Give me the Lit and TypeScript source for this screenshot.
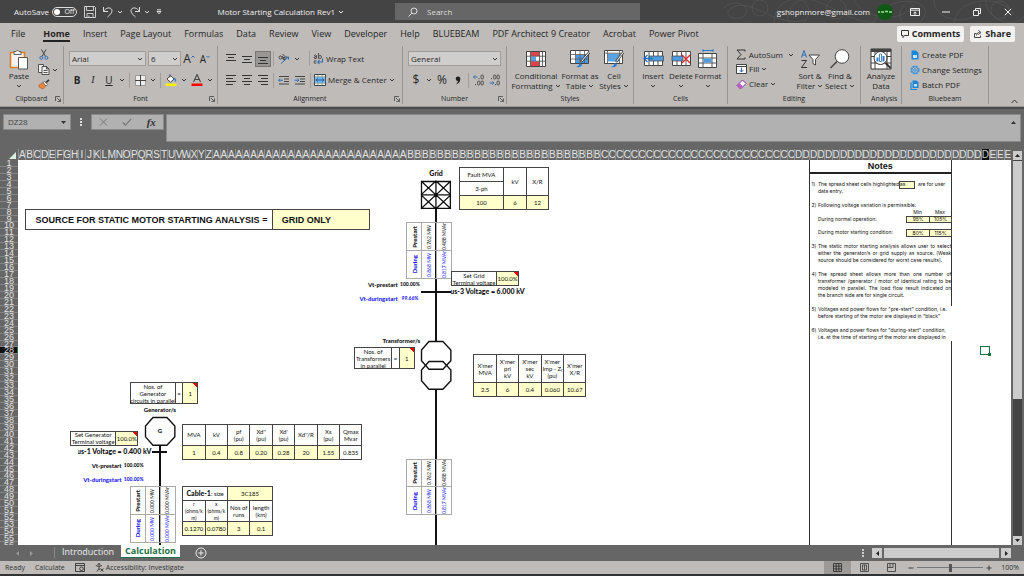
import { LitElement, html, css, nothing, TemplateResult } from "lit";
import { customElement } from "lit/decorators.js";

const COLS = 133;
const ROWS = 56;

/* ---------- icons ---------- */
const chev = html`<svg class="chev" width="6" height="6" viewBox="0 0 6 6"><path d="M1 2l2 2 2-2" fill="none" stroke="#333" stroke-width="1"/></svg>`;
const launcher = html`<svg class="launch" width="6" height="6" viewBox="0 0 6 6"><path d="M.5 5V.5H5M2 2l3 3M5.500 2.500v3h-3" fill="none" stroke="#444" stroke-width=".8"/></svg>`;
const bars = (d: string) => html`<svg width="12" height="12" viewBox="0 0 12 12"><path d=${d} stroke="#333" fill="none"/></svg>`;

const icSave = html`<svg width="12" height="12" viewBox="0 0 12 12" fill="none" stroke="#eee" stroke-width=".9"><path d="M.5 .5h10l1 1v10H.5zM2.500 .5v4h7v-4M3 11.500V7.500h6v4M5 9.500v2"/></svg>`;
const icUndo = html`<svg width="12" height="12" viewBox="0 0 12 12" fill="none" stroke="#ccc" stroke-width="1"><path d="M1.500 1v4.500H6M1.500 5.500C4 1.500 8 1 9.500 3.200 11 5.500 9 8 5.500 11"/></svg>`;
const icRedo = html`<svg width="12" height="12" viewBox="0 0 12 12" fill="none" stroke="#ccc" stroke-width="1"><path d="M10.500 1v4.500H6M10.500 5.500C8 1.500 4 1 2.500 3.200 1 5.500 3 8 6.500 11"/></svg>`;
const icSearch = html`<svg width="10" height="10" viewBox="0 0 10 10" fill="none" stroke="#ddd"><circle cx="6" cy="4" r="3"/><path d="M4 6L.5 9.500"/></svg>`;
const icPaste = html`<svg width="20" height="21" viewBox="0 0 20 21"><path d="M1.500 3.500h14v15h-14z" fill="#f4f1ee" stroke="#d9812a" stroke-width="1.600"/><path d="M5 2.500h2a1.600 1.600 0 013 0h2v3H5z" fill="#eee" stroke="#555" stroke-width=".9"/><path d="M9.500 8.500h9v11.500h-9z" fill="#fff" stroke="#555"/></svg>`;
const icCut = html`<svg width="10" height="11" viewBox="0 0 10 11" fill="none"><path d="M2.500 .5l4 7M7 .5l-4 7" stroke="#444"/><circle cx="2.400" cy="8.800" r="1.500" stroke="#2b6cb5"/><circle cx="7.400" cy="8.800" r="1.500" stroke="#2b6cb5"/></svg>`;
const icCopy = html`<svg width="12" height="11" viewBox="0 0 12 11" fill="#eee" stroke="#444" stroke-width=".9"><path d="M.5 .5h5v8h-5z"/><path d="M4 2.500h4.500l2.500 2.500v5.500H4zM8.500 2.500V5H11M5.500 6.500h4M5.500 8.500h4"/></svg>`;
const icPainter = html`<svg width="12" height="11" viewBox="0 0 12 11"><path d="M1 6l4-2.500 3 3L5 10 1 8z" fill="#f0883a" stroke="#a9561c" stroke-width=".6"/><path d="M5 3.500l1.500-1 3 3L8 7z" fill="#fff" stroke="#444" stroke-width=".7"/><path d="M8 3.500L11 .8" stroke="#333" stroke-width="1.600"/></svg>`;
const icBorders = html`<svg width="11" height="11" viewBox="0 0 11 11"><path d="M.5 .5h10v10H.5z" fill="#eee" stroke="#999"/><path d="M5.500 0v11M0 5.500h11" stroke="#444"/></svg>`;
const icFill = html`<svg width="12" height="12" viewBox="0 0 12 12"><path d="M2 5l3.500-3.500L9 5 5.500 8.300z" fill="#fff" stroke="#444"/><path d="M5 .3v3" stroke="#444"/><path d="M9.500 4q1.500 2 .8 3.500" stroke="#2b7cd3" fill="none" stroke-width="1.400"/><path d="M.5 9.500h11V12H.5z" fill="#ffef00"/></svg>`;
const icFontColor = html`<svg width="12" height="12" viewBox="0 0 12 12"><path d="M2.500 8L6 .5 9.500 8M3.800 5.500h4.500" fill="none" stroke="#444" stroke-width="1.100"/><path d="M.5 9.500h11V12H.5z" fill="#f00"/></svg>`;
const icOrient = html`<svg width="12" height="12" viewBox="0 0 12 12" fill="none"><circle cx="2.500" cy="4.500" r="1.500" stroke="#444"/><path d="M4 3l2 3M4.500 1l4 4" stroke="#444"/><circle cx="6" cy="5.500" r="1.200" stroke="#444"/><path d="M3 10.500L10.500 4M8 4h2.500v2.500" stroke="#2b6cb5"/></svg>`;
const icWrap = html`<svg width="11" height="12" viewBox="0 0 11 12" fill="none" stroke="#444" stroke-width=".9"><path d="M1 2.500q2-1 2.500 0V5.500M3.500 3.500q-3 0-2.500 1.500t2.500 0M5.500 0v5.500M5.500 3q3-1.500 3 1t-3 1M3.500 8q-2.500-1-2.500 1t2.500 1"/><path d="M9.500 5.500v3.500H5M6.500 7L4.800 9l1.700 2" stroke="#2b6cb5" stroke-width="1.100"/></svg>`;
const icMerge = html`<svg width="12" height="12" viewBox="0 0 12 12"><path d="M.5 .5h11v11H.5z" fill="#fff" stroke="#444"/><path d="M4 .5v11M8 .5v11M.5 3h11M.5 9h11" stroke="#555" stroke-width=".7"/><path d="M.8 3.200h10.400v5.600H.8z" fill="#6fb1e8"/><path d="M2 6h8M3.500 4.500L2 6l1.500 1.500M8.500 4.500L10 6 8.500 7.500" stroke="#1c5a9c" fill="none"/></svg>`;
const icOutdent = html`<svg width="12" height="12" viewBox="0 0 12 12" fill="none"><path d="M1 2.500h10M6 5h5M6 7.500h5M1 10h10" stroke="#444"/><path d="M.5 6.200h4.500M2.300 4.500L.6 6.200l1.700 1.700" stroke="#2b6cb5"/></svg>`;
const icIndent = html`<svg width="12" height="12" viewBox="0 0 12 12" fill="none"><path d="M1 2.500h10M6 5h5M6 7.500h5M1 10h10" stroke="#444"/><path d="M.5 6.200h4.500M3.200 4.500l1.700 1.700-1.700 1.700" stroke="#2b6cb5"/></svg>`;
const icDecL = html`<svg width="12" height="12" viewBox="0 0 12 12" fill="none" stroke="#444" stroke-width=".9"><path d="M.5 3h4M2.200 1.300L.6 3l1.600 1.700" stroke="#2b6cb5"/><rect x="8" y="1" width="2.400" height="4" rx="1.200"/><rect x="4.500" y="7" width="2.400" height="4" rx="1.200"/><rect x="8" y="7" width="2.400" height="4" rx="1.200"/><path d="M6 4v1.200M2.500 10v1.200"/></svg>`;
const icDecR = html`<svg width="12" height="12" viewBox="0 0 12 12" fill="none" stroke="#444" stroke-width=".9"><path d="M.5 9h4.500M3.200 7.300L4.900 9l-1.700 1.700" stroke="#2b6cb5"/><rect x="4.500" y="1" width="2.400" height="4" rx="1.200"/><rect x="8" y="1" width="2.400" height="4" rx="1.200"/><rect x="8" y="7" width="2.400" height="4" rx="1.200"/><path d="M2.500 4v1.200M6.500 10v1.200"/></svg>`;
const icCond = html`<svg width="20" height="18" viewBox="0 0 20 18"><path d="M.5 1.500h19v15H.5z" fill="#fff" stroke="#444"/><path d="M5 2h8v4H5zM5 11.500h9v4.500H5z" fill="#e0434a"/><path d="M5 6.500h5v4.500H5z" fill="#5aa2e0"/><path d="M4.500 1.500v15M13.500 1.500v15M16.500 1.500v15M.5 6.200h19M.5 11.200h19" stroke="#555" stroke-width=".9" fill="none"/></svg>`;
const icTable = html`<svg width="20" height="20" viewBox="0 0 20 20"><path d="M.5 1.500h18v13H.5z" fill="#fff" stroke="#444"/><path d="M6 6h12v8H6z" fill="#4f9be0"/><path d="M5.500 1.500v13M10 1.500v13M14.500 1.500v13M.5 5.500h18M.5 10h18" stroke="#555" stroke-width=".8" fill="none"/><path d="M19.500 3L11 13" stroke="#444" stroke-width="2.400"/><path d="M19.500 3L11.500 12.400" stroke="#fff" stroke-width="1"/><path d="M6 18q3-.5 3.500-4l2.500 1.500Q11 19 6 18z" fill="#2b7cd3"/></svg>`;
const icCell = html`<svg width="20" height="20" viewBox="0 0 20 20"><path d="M.5 1.500h18v13H.5z" fill="#fff" stroke="#444"/><path d="M4 4.500h11.500v8H4z" fill="#5aa2e0"/><path d="M3.500 1.500v13M15.500 1.500v13M.5 4.200h18" stroke="#555" stroke-width=".8" fill="none"/><path d="M19.500 3L12 13" stroke="#444" stroke-width="2.400"/><path d="M19.500 3L12.500 12.400" stroke="#fff" stroke-width="1"/><path d="M7 18q3-.5 3.500-4l2.500 1.500Q12 19 7 18z" fill="#2b7cd3"/></svg>`;
const icInsert = html`<svg width="21" height="18" viewBox="0 0 21 18"><path d="M1.500 1.500h18v14h-18z" fill="#fff" stroke="#444"/><path d="M6 1.500v14M10.500 1.500v14M15 1.500v14" stroke="#555"/><path d="M6 6h14.500v5H6z" fill="#4f9be0" stroke="#444" stroke-width=".7"/><path d="M.8 8.500h9M4.500 5L1 8.500 4.500 12" stroke="#1f6fc0" stroke-width="1.300" fill="none"/></svg>`;
const icDelete = html`<svg width="21" height="18" viewBox="0 0 21 18"><path d="M1.500 1.500h18v14h-18z" fill="#fff" stroke="#444"/><path d="M6 1.500v14M10.500 1.500v14M15 1.500v14" stroke="#555"/><path d="M1 6h11v5H1z" fill="#4f9be0" stroke="#444" stroke-width=".7"/><path d="M11 5l8 8M19 5l-8 8" stroke="#e02a2a" stroke-width="1.400"/></svg>`;
const icFormat = html`<svg width="20" height="20" viewBox="0 0 20 20"><path d="M5 1.500h10M5 0v3M15 0v3" stroke="#2b7cd3"/><path d="M.5 4.500h18v14H.5z" fill="#fff" stroke="#444"/><path d="M5 4.500v14M14 4.500v14M.5 9h18M.5 14h18" stroke="#555"/><path d="M5.500 9.500h8v4h-8z" fill="#4f9be0"/></svg>`;
const icSigma = html`<svg width="10" height="11" viewBox="0 0 10 11"><path d="M9 2.500V1H1l4 4.500L1 10h8V8.500" fill="none" stroke="#333"/></svg>`;
const icFillDown = html`<svg width="11" height="10" viewBox="0 0 11 10"><path d="M.5 .5h10v9H.5z" fill="#fff" stroke="#444"/><path d="M.5 2.500h10" stroke="#444"/><path d="M5.500 3.500v4.500M3.500 6l2 2 2-2" stroke="#2b6cb5" fill="none"/></svg>`;
const icClear = html`<svg width="11" height="11" viewBox="0 0 11 11"><path d="M1 6.500L6.500 1 10 4.500 4.500 10z" fill="#fff" stroke="#8b2f9b"/><path d="M1 6.500L3.500 4 7 7.500 4.500 10z" fill="#b95cc8"/></svg>`;
const icSort = html`<svg width="20" height="20" viewBox="0 0 20 20" fill="none"><path d="M1.500 8.500L4 1.500l2.500 7M2.500 6h3.200" stroke="#2b6cb5"/><path d="M1.500 11.500h5L1.500 18.500H7" stroke="#333"/><path d="M9 6h10.500L15.500 10.500v5.500L13 14.500v-4z" fill="#fff" stroke="#444"/></svg>`;
const icFind = html`<svg width="20" height="20" viewBox="0 0 20 20"><circle cx="12" cy="7.500" r="6.800" fill="#fff" stroke="#444"/><path d="M7 12.500L.5 19" stroke="#444" stroke-width="1.400"/></svg>`;
const icAnalyze = html`<svg width="22" height="22" viewBox="0 0 22 22"><path d="M1 1h20v20H1z" fill="#fff" stroke="#333"/><path d="M1 1h20v3H1z" fill="#444"/><path d="M1 8.500h20M1 15h20M5 4v17M17 4v17" stroke="#444"/><circle cx="10.500" cy="10" r="6.500" fill="#fff" stroke="#333"/><path d="M6.500 9.500h2v4h-2zM12.500 8h2v5.500h-2z" fill="#2b7cd3"/><path d="M9.500 6h2v7.500h-2z" fill="#fff" stroke="#2b6cb5" stroke-width=".8"/><path d="M15.500 15l5 5" stroke="#333" stroke-width="2"/></svg>`;
const icPdf1 = html`<svg width="8" height="10" viewBox="0 0 8 10"><path d="M.5 .5h4.500L7.500 3v6.500h-7z" fill="#1a86d9"/><path d="M2 5h4v3H2z" fill="#c9e4fb"/></svg>`;
const icPdf2 = html`<svg width="10" height="10" viewBox="0 0 10 10" fill="none" stroke="#3a95dd"><circle cx="5" cy="5" r="3.800" stroke-width="1.600" stroke-dasharray="2 1"/><circle cx="5" cy="5" r="3.200"/><circle cx="5" cy="5" r="1.300"/></svg>`;
const icPdf3 = html`<svg width="9" height="10" viewBox="0 0 9 10"><path d="M1 2.500v7h6" fill="none" stroke="#1a86d9" stroke-width="1.200"/><path d="M2.500 .5h4L8.500 2.500v5.500h-6z" fill="#1a86d9"/><path d="M4 4h3v2.500H4z" fill="#c9e4fb"/></svg>`;
const icGridView = html`<svg width="9" height="9" viewBox="0 0 9 9"><path d="M.5 .5h8v8h-8zM3.200 .5v8M5.900 .5v8M.5 3.200h8M.5 5.900h8" fill="none" stroke="#333" stroke-width=".9"/></svg>`;
const icPageView = html`<svg width="9" height="9" viewBox="0 0 9 9"><path d="M.5 .5h8v8h-8zM2.500 2h4v5h-4zM4.500 2v5" fill="none" stroke="#444" stroke-width=".9"/></svg>`;
const icBreakView = html`<svg width="9" height="9" viewBox="0 0 9 9"><path d="M.5 .5h8v8h-8zM3 .5v4h3v-4M.5 4.500H3" fill="none" stroke="#444" stroke-width=".9"/></svg>`;

/* ---------- sheet data ---------- */
type Area = [number, number, number, number]; // column start, row start, column end, row end
const area = (a: Area) => `grid-area:${a[1]}/${a[0]}/${a[3]}/${a[2]}`;

interface Cell { w: number; t: string | TemplateResult; k?: string; rows?: number }
interface DataTable { name: string; at: Area; rows: { h: number; cells: Cell[] }[] }

const c3 = (ts: string[], k = "") => ts.map((t) => ({ w: 3, t, k }));
const tables: DataTable[] = [
  { name: "Grid data", at: [60, 2, 72, 8], rows: [
    { h: 2, cells: [{ w: 6, t: "Fault MVA" }, { w: 3, t: "kV", rows: 4 }, { w: 3, t: "X/R", rows: 4 }] },
    { h: 2, cells: [{ w: 6, t: "3-ph" }] },
    { h: 2, cells: [{ w: 6, t: "100", k: "in" }, { w: 3, t: "6", k: "in" }, { w: 3, t: "12", k: "in" }] },
  ] },
  { name: "Transformer data", at: [62, 29, 77, 35], rows: [
    { h: 4, cells: c3(["X'mer\nMVA", "X'mer\npri\nkV", "X'mer\nsec\nkV", "X'mer\nImp - Zₜ\n(pu)", "X'mer\nX/R"]) },
    { h: 2, cells: c3(["2.5", "6", "0.4", "0.060", "10.67"], "in") },
  ] },
  { name: "Generator data", at: [23, 39, 47, 44], rows: [
    { h: 3, cells: c3(["MVA", "kV", "pf\n(pu)", "Xd''\n(pu)", "Xd'\n(pu)", "Xd''/R", "Xs\n(pu)", "Qmax\nMvar"]) },
    { h: 2, cells: [...c3(["1", "0.4", "0.8", "0.20", "0.28", "20", "1.55"], "in"), { w: 3, t: "0.835" }] },
  ] },
  { name: "Cable data", at: [23, 48, 35, 55], rows: [
    { h: 2, cells: [{ w: 6, t: html`<b>Cable-1</b>: size` }, { w: 6, t: "3C185", k: "in" }] },
    { h: 3, cells: [...c3(["r\n(ohms/k\nm)", "x\n(ohms/k\nm)"], "sm"), ...c3(["Nos of\nruns", "length\n(km)"])] },
    { h: 2, cells: c3(["0.1270", "0.0780", "3", "0.1"], "in") },
  ] },
];

const flows: { x: number; y: number; v: string[] }[] = [
  { x: 53, y: 10, v: ["0.762 MW", "0.488 MVAr", "0.868 MW", "0.817 MVAr"] },
  { x: 53, y: 44, v: ["0.762 MW", "0.488 MVAr", "0.868 MW", "0.817 MVAr"] },
  { x: 16, y: 48, v: ["0.000 MW", "0.000 MVAr", "0.000 MW", "0.000 MVAr"] },
];

const settings: { id: string; label: string; at: Area; eq?: Area; val: Area; v: string }[] = [
  { id: "sg", label: "Set Grid\nTerminal voltage", at: [59, 17, 65, 19], val: [65, 17, 68, 19], v: "100.0%" },
  { id: "nt", label: "Nos. of\nTransformers\nin parallel", at: [46, 28, 51, 31], eq: [51, 28, 52, 31], val: [52, 28, 54, 31], v: "1" },
  { id: "ng", label: "Nos. of\nGenerator\ncircuits in parallel", at: [16, 33, 22, 36], eq: [22, 33, 23, 36], val: [23, 33, 25, 36], v: "1" },
  { id: "gv", label: "Set Generator\nTerminal voltage", at: [8, 40, 14, 42], val: [14, 40, 17, 42], v: "100.0%" },
];

const texts: { at: Area; k: string; t: string }[] = [
  { at: [53, 2, 61, 4], k: "b mid lg", t: "Grid" },
  { at: [44, 18, 52, 20], k: "b end", t: "Vt-prestart" },
  { at: [52, 18, 55, 20], k: "b tiny mid", t: "100.00%" },
  { at: [44, 20, 52, 22], k: "b end blue", t: "Vt-duringstart" },
  { at: [52, 20, 55, 22], k: "b tiny mid blue", t: "99.66%" },
  { at: [59, 19, 69, 21], k: "b end lg clip", t: "Bus-3 Voltage = 6.000 kV" },
  { at: [48, 26, 55, 28], k: "b end", t: "Transformer/s" },
  { at: [16, 36, 24, 38], k: "b mid", t: "Generator/s" },
  { at: [18, 38, 22, 42], k: "b mid", t: "G" },
  { at: [9, 42, 19, 44], k: "b end lg clip", t: "Bus-1 Voltage = 0.400 kV" },
  { at: [8, 44, 15, 46], k: "b end", t: "Vt-prestart" },
  { at: [15, 44, 18, 46], k: "b tiny mid", t: "100.00%" },
  { at: [7, 46, 15, 48], k: "b end blue", t: "Vt-duringstart" },
  { at: [15, 46, 18, 48], k: "b tiny mid blue", t: "100.00%" },
];

const notes: { row: number; n?: string; t: string; j?: boolean; end?: number }[] = [
  { row: 4, n: "1)", t: "The spread sheet cells highlighted", end: 119 },
  { row: 5, t: "data entry." },
  { row: 7, n: "2)", t: "Following voltage variation is permissible:" },
  { row: 9, t: "During normal operation:", end: 119 },
  { row: 11, t: "During motor starting condition:", end: 119 },
  { row: 13, n: "3)", t: "The static motor starting analysis allows user to select", j: true },
  { row: 14, t: "either the generator/s or grid supply as source. (Weak", j: true },
  { row: 15, t: "source should be considered for worst case results)." },
  { row: 17, n: "4)", t: "The spread sheet allows more than one number of", j: true },
  { row: 18, t: "transformer /generator / motor of identical rating to be", j: true },
  { row: 19, t: "modeled in parallel. The load flow result indicated on", j: true },
  { row: 20, t: "the branch side are for single circuit." },
  { row: 22, n: "5)", t: "Voltages and power flows for \"pre-start\" condition, i.e." },
  { row: 23, t: "before starting of the motor are displayed in \"black\"" },
  { row: 25, n: "6)", t: "Voltages and power flows for \"during-start\" condition," },
  { row: 26, t: "i.e. at the time of starting of the motor are displayed in" },
];

const noteCells: { at: Area; k: string; t: string }[] = [
  { at: [119, 4, 121, 5], k: "box in start", t: "as" },
  { at: [121, 4, 126, 5], k: "start gap", t: "are for user" },
  { at: [120, 8, 123, 9], k: "mid", t: "Min" },
  { at: [123, 8, 126, 9], k: "mid", t: "Max" },
  { at: [120, 9, 123, 10], k: "box in mid", t: "95%" },
  { at: [123, 9, 126, 10], k: "box in mid", t: "105%" },
  { at: [120, 11, 123, 12], k: "box in mid", t: "80%" },
  { at: [123, 11, 126, 12], k: "box in mid", t: "115%" },
];

const columnName = (i: number): string => (i < 26 ? "" : String.fromCharCode(64 + Math.floor(i / 26))) + String.fromCharCode(65 + (i % 26));

/* ---------- worksheet ---------- */
@customElement("work-sheet")
class WorkSheet extends LitElement {
  static styles = css`
    :host { display: grid; grid-template: 11px minmax(0, 1fr) / 18px minmax(0, 1fr); background: #666; min-height: 0; overflow: hidden; font-family: Lato, "Liberation Sans", sans-serif; }
    .corner { display: flex; justify-content: flex-end; align-items: flex-end; padding: 0 2px 1px 0; }
    .cols { display: grid; grid-template-columns: repeat(133, minmax(0, 1fr)); font: 10px/12px "Liberation Sans", sans-serif; color: #e4e4e4; }
    .cols span { border-left: 1px solid #8e8e8e; box-sizing: border-box; display: flex; justify-content: center; }
    .cols .on { background: #0c0c0c; color: #ccc; box-shadow: inset 0 -1px #1d7044; }
    .rowwrap, .canvas { overflow: hidden; min-height: 0; }
    .rows { height: 101%; display: grid; grid-template-rows: repeat(56, minmax(0, 1fr)); font: 9px/7px "Liberation Sans", sans-serif; color: #e4e4e4; text-align: center; }
    .rows span { border-bottom: 1px solid #858585; box-sizing: border-box; }
    .rows .on { color: #ddd; background: #111; box-shadow: inset -1px 0 #1d7044; }
    .canvas { background: #fff; }
    .grid { height: 101%; display: grid; grid-template-columns: repeat(133, minmax(0, 1fr)); grid-template-rows: repeat(56, minmax(0, 1fr)); font-size: 6px; line-height: 7px; color: #111; }
    table { display: grid; grid-template: subgrid / subgrid; }
    tbody, tr { display: contents; }
    th, td, .box { font-weight: normal; border: 1px solid #444; margin: 0 -1px -1px 0; padding: 0; }
    th, td, .set { display: flex; align-items: center; justify-content: center; text-align: center; white-space: pre; overflow: hidden; }
    .set { overflow: visible; }
    .in { background: #ffffcc; }
    .sm { font-size: 5px; }
    b { font-weight: 900; font-size: 7px; }
    .t { display: flex; align-items: center; white-space: pre; min-width: 0; }
    .b { font-weight: 900; }
    .lg { font-size: 7px; }
    .mid { justify-content: center; }
    .end { justify-content: flex-end; padding-right: 1px; }
    .start { justify-content: flex-start; }
    .gap { padding-left: 4px; }
    .clip { overflow: hidden; }
    .blue { color: #1c1cf0; }
    .tiny { font-size: 5px; }
    .flow { display: grid; grid-template: subgrid / subgrid; }
    .f { display: flex; align-items: center; justify-content: center; border: 1px solid #aaa; margin: 0 -1px -1px 0; overflow: hidden; font-size: 5px; }
    .f.b { font-size: 6px; }
    .f span { writing-mode: vertical-rl; transform: rotate(180deg); white-space: nowrap; }
    input { font: inherit; color: inherit; width: 100%; height: 100%; box-sizing: border-box; border: 0; padding: 0; margin: 0; background: none; text-align: center; min-width: 0; }
    .val { background: linear-gradient(225deg, #e00 3px, #ffffcc 3px); min-width: 0; }
    .src { display: flex; align-items: center; font: bold 9px/10px "Liberation Sans", sans-serif; padding-left: 9px; white-space: nowrap; }
    svg { display: block; width: 100%; height: 100%; overflow: visible; }
    .corner svg { width: 7px; height: 7px; }
    .v { border-left: 2px solid #111; margin-left: -1px; }
    .h { border-top: 2px solid #111; margin-top: -1px; }
    .nl { border-left: 1px solid #333; }
    .nh { border-bottom: 2px solid #222; font: bold 9px/10px "Liberation Sans", sans-serif; display: flex; align-items: center; justify-content: center; }
    .note, .num, .nc { font-family: Inter, "Liberation Sans", sans-serif; font-size: 5px; white-space: nowrap; }
    .note { padding-left: 1px; }
    .num { padding-left: 2px; }
    .j { text-align: justify; text-align-last: justify; }
    .sel { border: 1px solid #1d7044; margin: -1px; position: relative; }
    .sel::after { content: ""; position: absolute; right: -2px; bottom: -2px; width: 3px; height: 3px; background: #1d7044; }
  `;
  render() {
    const oct = "M8 .5H22L30 9V20L22 28.500H8L.5 20V9z";
    return html`
      <div class="corner"><svg viewBox="0 0 7 7"><path d="M7 0v7H0z" fill="#d8f0e2"/></svg></div>
      <div class="cols">${Array.from({ length: COLS }, (_, i) => html`<span class=${i === 129 ? "on" : ""}>${columnName(i)[0]}</span>`)}</div>
      <div class="rowwrap"><div class="rows">${Array.from({ length: ROWS }, (_, i) => html`<span class=${i === 27 ? "on" : ""}>${i + 1}</span>`)}</div></div>
      <div class="canvas"><div class="grid">
        <div class="v" style=${area([57, 8, 58, 27])}></div>
        <div class="v" style=${area([57, 34, 58, 57])}></div>
        <div class="v" style=${area([20, 42, 21, 57])}></div>
        <div class="h" style=${area([55, 20, 59, 21])}></div>
        <div class="h" style=${area([19, 43, 21, 44])}></div>
        <div style=${area([55, 4, 59, 8])}><svg viewBox="0 0 30 28" preserveAspectRatio="none"><path d="M.5 .5h29v27H.5zM0 14h30M15 0v28M0 0l15 14L30 0M0 14L15 0l15 14M0 14l15 14 15-14M0 28l15-14 15 14" fill="none" stroke="#111" stroke-width="1.300"/></svg></div>
        <div style=${area([55, 27, 59, 31])}><svg viewBox="0 0 30 28" preserveAspectRatio="none"><path d=${oct} fill="none" stroke="#111" stroke-width="1.400"/></svg></div>
        <div style=${area([55, 30, 59, 34])}><svg viewBox="0 0 30 28" preserveAspectRatio="none"><path d=${oct} fill="none" stroke="#111" stroke-width="1.400"/></svg></div>
        <div style=${area([18, 38, 22, 42])}><svg viewBox="0 0 30 28" preserveAspectRatio="none"><path d=${oct} fill="none" stroke="#111" stroke-width="1.400"/></svg></div>
        <div class="src box" style=${area([2, 8, 35, 11])}>SOURCE FOR STATIC MOTOR STARTING ANALYSIS =</div>
        <div class="src box in" style=${area([35, 8, 48, 11])}>GRID ONLY</div>
        ${tables.map((tb) => html`<table aria-label=${tb.name} style=${area(tb.at)}><tbody>${tb.rows.map((r) => html`<tr>${r.cells.map((c) => {
          const st = `grid-column:span ${c.w};grid-row:span ${c.rows ?? r.h}`;
          return c.k === "in" ? html`<td class="in" style=${st}>${c.t}</td>` : html`<th class=${c.k ?? ""} style=${st}>${c.t}</th>`;
        })}</tr>`)}</tbody></table>`)}
        ${flows.map((f) => html`<div class="flow" style=${area([f.x, f.y, f.x + 6, f.y + 8])}>${["Prestart", f.v[0], f.v[1], "During", f.v[2], f.v[3]].map((t, i) => html`<div class="f ${i > 2 ? "blue" : ""} ${i % 3 ? "" : "b"}" style="grid-area:${i > 2 ? 5 : 1}/${(i % 3) * 2 + 1}/span 4/span 2"><span>${t}</span></div>`)}</div>`)}
        ${settings.map((s) => html`
          <label class="set box" for=${s.id} style=${area(s.at)}>${s.label}</label>
          ${s.eq ? html`<div class="set box" style=${area(s.eq)}>=</div>` : nothing}
          <div class="box val" style=${area(s.val)}><input id=${s.id} .value=${s.v}></div>`)}
        ${texts.map((x) => html`<div class="t ${x.k}" style=${area(x.at)}>${x.t}</div>`)}
        <div class="nh" style=${area([107, 1, 126, 3])}>Notes</div>
        <div class="nl" style=${area([107, 1, 108, 57])}></div>
        <div class="nl" style=${area([126, 1, 127, 22])}></div>
        <div class="nl" style=${area([126, 27, 127, 57])}></div>
        ${notes.map((n) => html`
          ${n.n ? html`<div class="num" style=${area([107, n.row, 108, n.row + 1])}>${n.n}</div>` : nothing}
          <div class="note ${n.j ? "j" : ""}" style=${area([108, n.row, n.end ?? 126, n.row + 1])}>${n.t}</div>`)}
        ${noteCells.map((x) => html`<div class="t nc ${x.k}" style=${area(x.at)}>${x.t}</div>`)}
        <div class="sel" style=${area([130, 28, 131, 29])}></div>
      </div></div>`;
  }
}

/* ---------- application ---------- */
@customElement("app-root")
class AppRoot extends LitElement {
  static styles = css`
    :host { display: flex; flex-direction: column; height: 100vh; overflow: hidden; background: #666; font: 8px/10px "Open Sans", "Noto Sans", sans-serif; color: #262626; }
    * { box-sizing: border-box; }
    svg { display: block; flex: none; }
    button { font: inherit; color: inherit; background: none; border: 0; padding: 0; margin: 0; display: flex; align-items: center; justify-content: center; white-space: nowrap; }
    .title { height: 23px; flex: none; background: #444; color: #f2f2f2; display: grid; grid-template-columns: 395px 245px minmax(0, 1fr); align-items: center; position: relative; }
    .art { position: absolute; right: 0; top: 0; }
    .tl { display: flex; align-items: center; padding-left: 14px; }
    .switch { width: 25px; height: 10px; border: 1px solid #ddd; border-radius: 5px; font-size: 7px; gap: 4px; margin: 0 7px 0 3px; line-height: 8px; }
    .knob { width: 6px; height: 6px; border-radius: 3px; background: #fff; }
    .qa { gap: 3px; margin-right: 6px; }
    .qa path { stroke: #ddd; }
    .name { margin-left: auto; margin-right: 51px; gap: 3px; }
    .name path { stroke: #eee; }
    .search { height: 17px; background: #666; display: flex; align-items: center; gap: 9px; padding-left: 13px; }
    .search input { flex: 1; min-width: 0; border: 0; background: none; font: inherit; padding: 0; color: #eee; }
    .search input::placeholder { color: #ddd; }
    .tr { display: flex; align-items: center; justify-content: flex-end; padding-right: 11px; position: relative; }
    .avatar { width: 16px; height: 16px; border-radius: 8px; background: #0e5a14; margin: 0 17px 0 7px; }
    .win { width: 10px; margin-right: 21px; }
    .win:last-child { margin-right: 0; }
    .tabs { height: 21px; flex: none; background: #bebbb8; display: flex; align-items: center; padding: 0 9px 0 11px; gap: 13px; font-size: 9px; line-height: 12px; }
    .tab:first-child { margin-right: 5px; }
    .tab.on { font-weight: bold; box-shadow: 0 2px #222; }
    .act { background: #f3f2f1; height: 16px; border-radius: 2px; padding: 0 4px; gap: 3px; font-weight: bold; }
    .act.first { margin-left: auto; margin-right: -7px; }
    .ribbon { height: 63px; flex: none; background: #bebbb8; display: grid; grid-template-columns: 64px 154px 185px 104px 127px 94px 133px 41px 87px minmax(0, 1fr); border-bottom: 1px solid #999; }
    .group { display: grid; grid-template-rows: minmax(0, 1fr) 10px; border-right: 1px solid #979492; margin: 2px 0; }
    .foot { display: grid; grid-template-columns: 10px 1fr 10px; font-size: 7px; text-align: center; align-items: center; }
    .foot span { grid-column: 2; white-space: nowrap; }
    .body { display: flex; min-width: 0; }
    .cells { padding-left: 4px; }
    .stack { display: flex; flex-direction: column; justify-content: space-around; padding: 1px 0 2px; }
    .big { flex-direction: column; justify-content: flex-start; padding-top: 2px; line-height: 10px; min-width: 0; }
    .big .pic { height: 22px; display: flex; align-items: center; margin-bottom: 1px; }
    .big span.l { display: flex; align-items: center; gap: 2px; height: 10px; }
    .two { display: grid; grid-template-rows: 17px 18px; row-gap: 4px; padding: 4px 0 0 5px; align-content: start; }
    .line { display: flex; align-items: center; }
    .combo { display: grid; height: 15px; align-items: center; background: #d0cecc; border: 1px solid #a09d9b; }
    .combo > * { grid-area: 1/1; }
    .combo svg { justify-self: end; margin-right: 2px; }
    select { appearance: none; border: 0; background: none; font: inherit; color: inherit; padding: 0 0 0 2px; width: 100%; }
    .w76 { width: 77px; margin-right: 2px; }
    .w33 { width: 33px; }
    .w92 { width: 93px; }
    .s16 { width: 16px; height: 16px; }
    .s10 { width: 10px; height: 16px; }
    .bar { width: 1px; height: 15px; background: #a09d9b; margin: 0 2px; }
    .space { width: 5px; }
    .press { background: #999694; border: 1px solid #777; }
    .al { font-size: 12px; }
    .as { font-size: 10px; }
    .bold { font-weight: bold; font-size: 10px; }
    .ital { font-style: italic; font-size: 10px; font-family: "Liberation Serif", serif; }
    .und { text-decoration: underline; font-size: 10px; }
    .sym { font-size: 12px; }
    .wide { gap: 2px; padding-left: 1px; }
    .row { justify-content: flex-start; gap: 2px; }
    .row i { width: 11px; display: flex; justify-content: center; }
    .ch2 { margin-left: 3px; }
    .edit { width: 66px; padding-left: 8px; }
    .pdf { padding-left: 7px; }
    .collapse { align-self: end; justify-self: end; margin: 0 6px 2px 0; }
    .fbar { flex: none; height: 42px; border-top: 2px solid #4a4a4a; display: flex; align-items: flex-start; padding: 5px 3px 0 3px; }
    .namebox { width: 68px; height: 16px; background: #b1b1b1; border: 1px solid #8a8a8a; display: grid; align-items: center; }
    .namebox > * { grid-area: 1/1; }
    .namebox input { border: 0; background: none; font: inherit; color: #444; padding: 0 0 0 4px; width: 100%; }
    .namebox svg { justify-self: end; margin-right: 4px; }
    .dots { width: 20px; height: 16px; display: flex; align-items: center; justify-content: center; }
    .fx { width: 73px; height: 16px; background: #b1b1b1; border: 1px solid #8a8a8a; display: flex; justify-content: space-around; align-items: center; margin-right: 2px; }
    .fxl { font: italic bold 11px/12px "Liberation Serif", serif; color: #333; }
    .formula { flex: 1; min-width: 0; height: 28px; background: #b1b1b1; border: 1px solid #8a8a8a; display: grid; grid-template-columns: 1fr 14px; }
    .formula textarea { border: 0; background: none; resize: none; padding: 2px; font: inherit; min-width: 0; outline: 0; }
    .formula svg { margin: 5px 0 0 4px; }
    .main { flex: 1; min-height: 0; display: grid; grid-template-columns: minmax(0, 1fr) 13px; }
    .vs { display: grid; grid-template-rows: 9px 239fr 137fr 9px; margin: 2px 2px 0 2px; background: #444; }
    .sb { background: #ccc; }
    .vthumb { background: #ccc; margin-top: 1px; }
    .sheets { height: 16px; flex: none; display: flex; align-items: stretch; color: #eee; font-size: 9px; line-height: 12px; padding-right: 13px; }
    .sheets .nav { width: 14px; }
    .sheets .nav:first-child { margin-left: 10px; }
    .sheets .sep { width: 1px; background: #888; margin: 2px 7px 3px 16px; }
    .sheets .calc { background: #fff; color: #1d7044; font-weight: bold; padding: 0 4px; margin: 0 15px 2px 7px; border-bottom: 1px solid #1d7044; height: 13px; }
    .sheets .intro { height: 13px; }
    .hs { margin-left: auto; display: flex; align-items: center; gap: 2px; }
    .hs .hd { margin-right: 6px; }
    .hs .sb { width: 10px; height: 10px; }
    .hs .ht { width: 115px; height: 10px; background: #ccc; }
    .status { height: 13px; flex: none; background: #bebbb8; display: flex; align-items: center; padding: 0 5px; font-size: 7px; color: #333; gap: 10px; }
    .status .acc { gap: 2px; }
    .views { margin-left: auto; display: flex; align-self: stretch; }
    .views button { width: 27px; }
    .views .on { background: #9c9997; }
    .zoom { display: flex; align-items: center; gap: 3px; margin: 0 -1px 0 -7px; }
    .zoom input { appearance: none; width: 66px; height: 10px; margin: 0; background: linear-gradient(#777, #777) center / 100% 1px no-repeat; }
    .zoom input::-webkit-slider-thumb { appearance: none; width: 3px; height: 8px; background: #555; }
    .edge { height: 2px; flex: none; background: #333; }
  `;
  private foot(name: string, l = false) {
    return html`<div class="foot"><span>${name}</span>${l ? html`<button aria-label="${name} settings">${launcher}</button>` : nothing}</div>`;
  }
  private big(w: number, pic: TemplateResult, a: string, b: string, arrow = true) {
    return html`<button class="big" style="width:${w}px"><span class="pic">${pic}</span><span class="l">${a}</span><span class="l">${b}${arrow ? chev : nothing}</span></button>`;
  }
  render() {
    const tabs = ["File", "Home", "Insert", "Page Layout", "Formulas", "Data", "Review", "View", "Developer", "Help", "BLUEBEAM", "PDF Architect 9 Creator", "Acrobat", "Power Pivot"];
    return html`
      <header class="title">
        <svg class="art" width="300" height="23" viewBox="0 0 300 23" fill="none" stroke="#525252" stroke-width="1"><path d="M0 8c10-12 30 0 20 8s-26-4-8-10 40 22 70 14M50 23c0-30 40-30 34-8S52 22 70 4s50 20 80 18M130 0c10 20 50 24 60 4M150 23c10-30 60-26 50-6s-34 4-20-12M210 0c0 26 50 26 46 4M230 23c4-28 50-28 60-8M262 0c-2 20 30 30 38 16"/><circle cx="36" cy="8" r="8"/><circle cx="112" cy="9" r="10"/><circle cx="276" cy="10" r="9"/></svg>
        <div class="tl"><span>AutoSave</span><button class="switch" role="switch" aria-checked="false" aria-label="AutoSave"><span class="knob"></span>Off</button>
          <button class="qa" aria-label="Save">${icSave}</button><button class="qa" aria-label="Undo">${icUndo}${chev}</button><button class="qa" aria-label="Redo">${icRedo}${chev}</button>
          <button class="qa" aria-label="Customize toolbar"><svg width="6" height="6" viewBox="0 0 6 6"><path d="M1 .8h4M1 2.500h4L3 4.800z" fill="none"/></svg></button>
          <button class="name">Motor Starting Calculation Rev1 ${chev}</button></div>
        <div class="search">${icSearch}<input placeholder="Search" aria-label="Search"></div>
        <div class="tr"><span>gshopnmore@gmail.com</span><button class="avatar" aria-label="Account"><svg width="14" height="4" viewBox="0 0 14 4"><path d="M0 2h2M3 2h3M7 1.500h3M11 2h3" stroke="#9fe08f" stroke-width="1.500"/></svg></button>
          <button class="win" aria-label="Ribbon display"><svg width="10" height="8" viewBox="0 0 10 8" fill="none" stroke="#eee"><path d="M.5 .5h9v7h-9zM.5 2.200h9M5 7V4M3.500 5.200L5 3.800l1.500 1.400"/></svg></button>
          <button class="win" aria-label="Minimize"><svg width="8" height="8" viewBox="0 0 8 8"><path d="M0 4h8" stroke="#eee"/></svg></button>
          <button class="win" aria-label="Restore"><svg width="8" height="8" viewBox="0 0 8 8" fill="none" stroke="#eee"><path d="M.5 2.500h5v5h-5zM2.500 2.500v-2h5v5h-2"/></svg></button>
          <button class="win" aria-label="Close"><svg width="8" height="8" viewBox="0 0 8 8"><path d="M.8 .8l6.400 6.400M7.200 .8L.8 7.200" stroke="#eee"/></svg></button></div>
      </header>
      <nav class="tabs">${tabs.map((t) => html`<button class="tab ${t === "Home" ? "on" : ""}">${t}</button>`)}
        <button class="act first"><svg width="8" height="8" viewBox="0 0 8 8"><path d="M.5 .5h7v5h-4l-1.500 2v-2H.5z" fill="none" stroke="#333"/></svg>Comments</button>
        <button class="act"><svg width="8" height="8" viewBox="0 0 8 8" fill="none" stroke="#333" stroke-width=".9"><path d="M2.500 3.500h-2v4h6V5.500M2.500 5.500q0-3 3-3M4.500 .5l2.500 2-2.500 2"/></svg>Share</button></nav>
      <section class="ribbon">
        <div class="group"><div class="body">
          <button class="big" style="width:38px"><span class="pic">${icPaste}</span><span class="l">Paste</span><span class="l">${chev}</span></button>
          <div class="stack"><button class="row" aria-label="Cut"><i>${icCut}</i></button><button class="row" aria-label="Copy">${icCopy}${chev}</button><button class="row" aria-label="Format Painter">${icPainter}</button></div>
        </div>${this.foot("Clipboard", true)}</div>
        <div class="group"><div class="two">
          <div class="line"><label class="combo w76"><select aria-label="Font"><option>Arial</option></select>${chev}</label><label class="combo w33"><select aria-label="Font size"><option>6</option></select>${chev}</label>
            <button class="s16 al">A<svg width="4" height="8" viewBox="0 0 4 8"><path d="M.5 2.500L2 1l1.500 1.500" fill="none" stroke="#2b6cb5"/></svg></button><button class="s16 as">A<svg width="4" height="8" viewBox="0 0 4 8"><path d="M.5 1L2 2.500 3.500 1" fill="none" stroke="#2b6cb5"/></svg></button></div>
          <div class="line"><button class="s16 bold">B</button><button class="s16 ital">I</button><button class="s16 und">U</button><button class="s10" aria-label="Underline style">${chev}</button><span class="bar"></span><button class="s16" aria-label="Borders">${icBorders}</button><button class="s10" aria-label="Border style">${chev}</button><span class="bar"></span><button class="s16" aria-label="Fill color">${icFill}</button><button class="s10" aria-label="More fill colors">${chev}</button><button class="s16" aria-label="Font color">${icFontColor}</button><button class="s10" aria-label="More font colors">${chev}</button></div>
        </div>${this.foot("Font", true)}</div>
        <div class="group"><div class="two">
          <div class="line"><button class="s16" aria-label="Top align">${bars("M1 1.500h10M3 4.500h6M1 7.500h10")}</button><button class="s16" aria-label="Middle align">${bars("M1 3.500h10M3 6.500h6M1 9.500h10")}</button><button class="s16 press" aria-label="Bottom align">${bars("M1 4.500h10M3 7.500h6M1 10.500h10")}</button><span class="bar"></span><button class="s16" aria-label="Orientation">${icOrient}</button><button class="s10" aria-label="More orientations">${chev}</button><span class="space"></span><span class="bar"></span><button class="wide">${icWrap}Wrap Text</button></div>
          <div class="line"><button class="s16" aria-label="Align left">${bars("M1 1.500h10M1 4.500h7M1 7.500h10M1 10.500h7")}</button><button class="s16" aria-label="Center">${bars("M1 1.500h10M3 4.500h6M1 7.500h10M3 10.500h6")}</button><button class="s16" aria-label="Align right">${bars("M1 1.500h10M4 4.500h7M1 7.500h10M4 10.500h7")}</button><span class="bar"></span><button class="s16" aria-label="Decrease indent">${icOutdent}</button><button class="s16" aria-label="Increase indent">${icIndent}</button><span class="bar"></span><button class="wide">${icMerge}Merge &amp; Center</button><button class="s10" aria-label="Merge options">${chev}</button></div>
        </div>${this.foot("Alignment", true)}</div>
        <div class="group"><div class="two">
          <div class="line"><label class="combo w92"><select aria-label="Number format"><option>General</option></select>${chev}</label></div>
          <div class="line"><button class="s16 sym">$</button><button class="s10" aria-label="Currency">${chev}</button><button class="s16 sym">%</button><button class="s16" aria-label="Comma style"><svg width="6" height="9" viewBox="0 0 6 9"><circle cx="3" cy="2.700" r="2.300" fill="#222"/><path d="M5.200 2.500Q5.500 7 1 8.500 3.500 6 3 3z" fill="#222"/></svg></button><span class="bar"></span><button class="s16" aria-label="Increase decimal">${icDecL}</button><button class="s16" aria-label="Decrease decimal">${icDecR}</button></div>
        </div>${this.foot("Number", true)}</div>
        <div class="group"><div class="body">${this.big(58, icCond, "Conditional", "Formatting")}${this.big(30, icTable, "Format as", "Table")}${this.big(38, icCell, "Cell", "Styles")}</div>${this.foot("Styles")}</div>
        <div class="group"><div class="body cells">${this.big(30, icInsert, "Insert", "")}${this.big(26, icDelete, "Delete", "")}${this.big(28, icFormat, "Format", "")}</div>${this.foot("Cells")}</div>
        <div class="group"><div class="body"><div class="stack edit"><button class="row"><i>${icSigma}</i>AutoSum<span class="ch2">${chev}</span></button><button class="row"><i>${icFillDown}</i>Fill${chev}</button><button class="row"><i>${icClear}</i>Clear${chev}</button></div>${this.big(32, icSort, "Sort &", "Filter")}${this.big(28, icFind, "Find &", "Select")}</div>${this.foot("Editing")}</div>
        <div class="group"><div class="body">${this.big(40, icAnalyze, "Analyze", "Data", false)}</div>${this.foot("Analysis")}</div>
        <div class="group"><div class="body"><div class="stack pdf"><button class="row"><i>${icPdf1}</i>Create PDF</button><button class="row"><i>${icPdf2}</i>Change Settings</button><button class="row"><i>${icPdf3}</i>Batch PDF</button></div></div>${this.foot("Bluebeam")}</div>
        <button class="collapse" aria-label="Collapse ribbon"><svg width="7" height="5" viewBox="0 0 7 5"><path d="M.5 4l3-3 3 3" fill="none" stroke="#333"/></svg></button>
      </section>
      <div class="fbar">
        <div class="namebox"><input aria-label="Name box" .value=${"DZ28"}><svg width="5" height="3" viewBox="0 0 5 3"><path d="M0 0h5L2.500 3z" fill="#333"/></svg></div>
        <div class="dots"><svg width="2" height="8" viewBox="0 0 2 8"><path d="M0 0h2v2H0zM0 3h2v2H0zM0 6h2v2H0z" fill="#ddd"/></svg></div>
        <div class="fx"><button aria-label="Cancel"><svg width="9" height="8" viewBox="0 0 9 8"><path d="M1 .5l7 7M8 .5l-7 7" stroke="#777"/></svg></button><button aria-label="Enter"><svg width="10" height="8" viewBox="0 0 10 8"><path d="M.8 4.500L3.500 7.200 9.200 .8" fill="none" stroke="#777" stroke-width="1.200"/></svg></button><button class="fxl">fx</button></div>
        <div class="formula"><textarea aria-label="Formula"></textarea><svg width="7" height="5" viewBox="0 0 7 5"><path d="M1 4l2.500-3L6 4z" fill="#333"/></svg></div>
      </div>
      <main class="main">
        <work-sheet></work-sheet>
        <div class="vs"><button class="sb" aria-label="Scroll up"><svg width="5" height="3" viewBox="0 0 5 3"><path d="M0 3h5L2.500 0z" fill="#222"/></svg></button><div class="vthumb"></div><div></div><button class="sb" aria-label="Scroll down"><svg width="5" height="3" viewBox="0 0 5 3"><path d="M0 0h5L2.500 3z" fill="#222"/></svg></button></div>
      </main>
      <div class="sheets">
        <button class="nav" aria-label="Previous sheet"><svg width="3" height="5" viewBox="0 0 3 5"><path d="M3 0v5L0 2.500z" fill="#999"/></svg></button><button class="nav" aria-label="Next sheet"><svg width="3" height="5" viewBox="0 0 3 5"><path d="M0 0v5l3-2.500z" fill="#999"/></svg></button><span class="sep"></span>
        <button class="intro">Introduction</button><button class="calc">Calculation</button>
        <button aria-label="New sheet"><svg width="12" height="12" viewBox="0 0 12 12" fill="none" stroke="#eee"><circle cx="6" cy="6" r="5"/><path d="M3.300 6h5.400M6 3.300v5.400"/></svg></button>
        <div class="hs"><svg class="hd" width="2" height="8" viewBox="0 0 2 8"><path d="M0 0h2v2H0zM0 3h2v2H0zM0 6h2v2H0z" fill="#ccc"/></svg><button class="sb" aria-label="Scroll left"><svg width="3" height="5" viewBox="0 0 3 5"><path d="M3 0v5L0 2.500z" fill="#222"/></svg></button><div class="ht"></div><button class="sb" aria-label="Scroll right"><svg width="3" height="5" viewBox="0 0 3 5"><path d="M0 0v5l3-2.500z" fill="#222"/></svg></button></div>
      </div>
      <footer class="status"><span>Ready</span><span>Calculate</span>
        <button aria-label="Record macro"><svg width="10" height="9" viewBox="0 0 10 9" fill="none" stroke="#333" stroke-width=".9"><path d="M.5 .5h9v8h-9zM.5 2.500h9"/><circle cx="6.500" cy="5.800" r="1.800"/></svg></button>
        <button class="acc"><svg width="9" height="9" viewBox="0 0 9 9" fill="none" stroke="#333" stroke-width=".9"><circle cx="4" cy="1.300" r=".9"/><path d="M.8 2.500L4 3.500l3-1M4 3.500v2L2 8.500M4 5.500L5 7M5.500 5.500l3 3M8.500 5.500l-3 3"/></svg>Accessibility: Investigate</button>
        <div class="views"><button class="on" aria-label="Normal">${icGridView}</button><button aria-label="Page layout">${icPageView}</button><button aria-label="Page break">${icBreakView}</button></div>
        <div class="zoom"><button aria-label="Zoom out"><svg width="6" height="6" viewBox="0 0 6 6"><path d="M.5 3h5" stroke="#333" stroke-width=".9"/></svg></button><input type="range" min="0" max="200" value="100" aria-label="Zoom"><button aria-label="Zoom in"><svg width="6" height="6" viewBox="0 0 6 6"><path d="M.5 3h5M3 .5v5" stroke="#333" stroke-width=".9"/></svg></button></div><span>100%</span></footer>
      <div class="edge"></div>`;
  }
}
